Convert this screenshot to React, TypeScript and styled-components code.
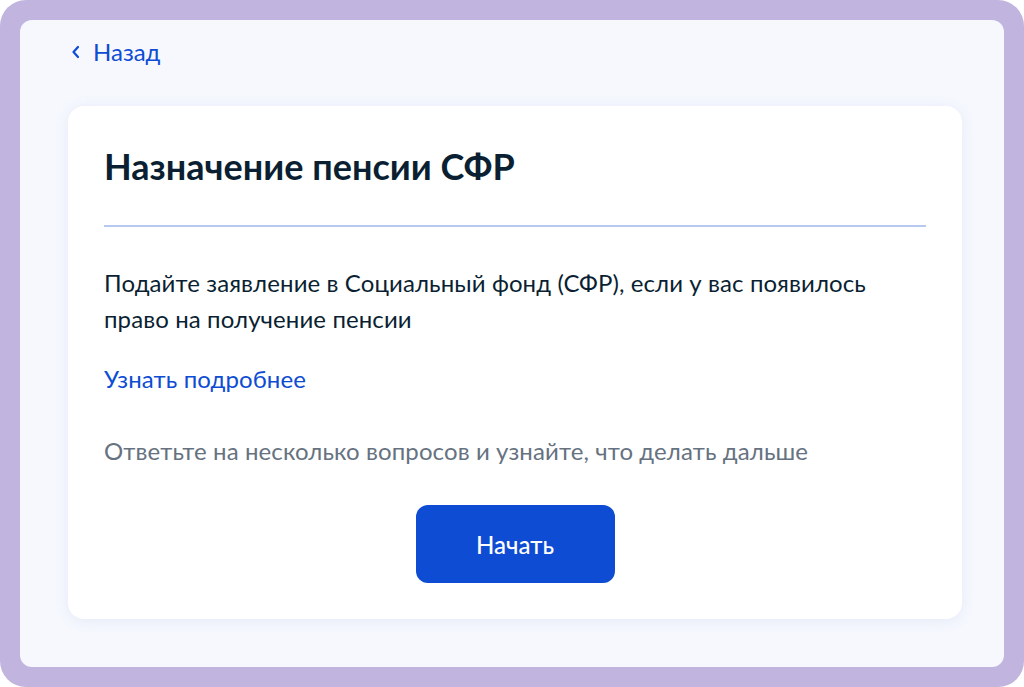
import React from "react";
import styled, { createGlobalStyle } from "styled-components";

const Global = createGlobalStyle`
  html, body { margin: 0; padding: 0; background: #ffffff; }
  body { font-family: Lato, "Noto Sans", sans-serif; }
  * { box-sizing: border-box; }
`;

const Frame = styled.div`
  width: 1024px;
  height: 687px;
  background: #c1b4df;
  border-radius: 26px;
  padding: 20px;
`;

const Panel = styled.div`
  height: 100%;
  background: #f6f8fe;
  border-radius: 12px;
  padding: 14px 42px 0 48px;
  display: flex;
  flex-direction: column;
`;

const Back = styled.a`
  display: flex;
  align-items: center;
  gap: 12px;
  color: #0d4cd3;
  font-size: 24px;
  line-height: 36px;
  height: 36px;
  text-decoration: none;
  padding-left: 3px;
`;

const Card = styled.div`
  margin-top: 36px;
  background: #ffffff;
  border-radius: 16px;
  box-shadow: 0 2px 14px rgba(87, 118, 190, 0.1);
  padding: 38px 36px 36px 36px;
  display: flex;
  flex-direction: column;
`;

const Title = styled.h1`
  margin: 0;
  font-size: 36px;
  line-height: 44px;
  font-weight: 700;
  color: #0b1f33;
`;

const Divider = styled.hr`
  margin: 37px 0 0 0;
  border: none;
  height: 2px;
  background: #b8c9ef;
`;

const Text = styled.p<{ $muted?: boolean }>`
  margin: ${(p) => (p.$muted ? "36px" : "38px")} 0 0 0;
  font-size: 24px;
  line-height: 36px;
  letter-spacing: 0.1px;
  color: ${(p) => (p.$muted ? "#66727f" : "#0b1f33")};
`;

const More = styled.a`
  margin-top: 24px;
  font-size: 24px;
  line-height: 36px;
  letter-spacing: 0.1px;
  color: #0d4cd3;
  text-decoration: none;
`;

const Actions = styled.div`
  display: flex;
  justify-content: center;
  margin-top: 36px;
`;

const Button = styled.button`
  width: 199px;
  height: 78px;
  border: none;
  border-radius: 12px;
  background: #0d4cd3;
  color: #ffffff;
  font-family: Lato, "Noto Sans", sans-serif;
  font-size: 24px;
  font-weight: 500;
  cursor: pointer;
`;

export default function App() {
  return (
    <>
      <Global />
      <Frame>
        <Panel>
          <Back href="#">
            <svg width="10" height="14" viewBox="0 0 10 14" fill="none">
              <path d="M7 2L2.5 7L7 12" stroke="#0d4cd3" strokeWidth="2.2" strokeLinecap="round" strokeLinejoin="round" />
            </svg>
            Назад
          </Back>
          <Card>
            <Title>Назначение пенсии СФР</Title>
            <Divider />
            <Text>
              Подайте заявление в Социальный фонд (СФР), если у вас появилось
              <br />
              право на получение пенсии
            </Text>
            <More href="#">Узнать подробнее</More>
            <Text $muted>Ответьте на несколько вопросов и узнайте, что делать дальше</Text>
            <Actions>
              <Button>Начать</Button>
            </Actions>
          </Card>
        </Panel>
      </Frame>
    </>
  );
}
